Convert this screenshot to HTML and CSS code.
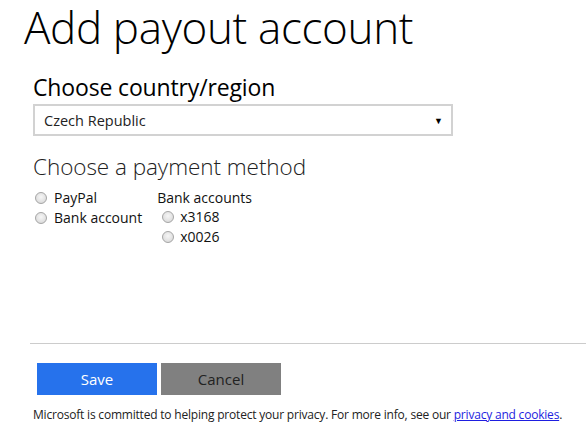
FILE: index.html
```html
<!DOCTYPE html>
<html>
<head>
<meta charset="utf-8">
<link rel="stylesheet" href="styles.css">
</head>
<body>
<div class="page">
  <h1 class="title">Add payout account</h1>
  <section class="country">
    <h2 class="label">Choose country/region</h2>
    <div class="select">
      <span class="select-text">Czech Republic</span>
      <span class="arrow">&#9660;</span>
    </div>
  </section>
  <section class="method">
    <h2 class="sub">Choose a payment method</h2>
    <div class="options">
      <div class="col">
        <label class="opt"><span class="radio"></span>PayPal</label>
        <label class="opt"><span class="radio"></span>Bank account</label>
      </div>
      <div class="col banks">
        <div class="banks-title">Bank accounts</div>
        <label class="opt sub-opt"><span class="radio"></span>x3168</label>
        <label class="opt sub-opt"><span class="radio"></span>x0026</label>
      </div>
    </div>
  </section>
  <hr class="rule">
  <div class="buttons">
    <button class="btn save">Save</button>
    <button class="btn cancel">Cancel</button>
  </div>
  <p class="privacy">Microsoft is committed to helping protect your privacy. For more info, see our <a href="#">privacy and cookies</a>.</p>
</div>
</body>
</html>
```
FILE: styles.css
```css
html, body { margin: 0; padding: 0; background: #fff; }
body { font-family: "Open Sans", "Noto Sans", sans-serif; color: #000; }
.page { width: 586px; height: 439px; overflow: hidden; position: relative; }
.title {
  margin: 0; padding: 0 0 0 24px;
  font-weight: 300; font-size: 44px; line-height: 54px;
  letter-spacing: -0.35px; color: #000;
}
.country { padding: 18px 0 0 33px; }
.label { margin: 0; font-weight: 400; font-size: 23px; line-height: 30px; color: #000; letter-spacing: -0.15px; }
.select {
  height: 28px; border: 2px solid #d2d2d2; margin-top: 2px;
  display: flex; align-items: center; justify-content: space-between;
  padding: 0 8px 0 9px; box-sizing: content-box; width: 399px;
}
.select-text { font-size: 14.5px; color: #222; }
.arrow { font-size: 9px; color: #000; }
.method { padding: 16px 0 0 33px; }
.sub { margin: 0; font-weight: 300; font-size: 22.5px; line-height: 30px; color: #222; letter-spacing: -0.05px; }
.options { display: flex; gap: 15px; padding-top: 6px; }
.col { display: flex; flex-direction: column; }
.opt { display: flex; align-items: center; font-size: 14px; line-height: 20px; color: #111; }
.radio {
  width: 10px; height: 10px; border-radius: 50%; border: 1px solid #a5a5a5;
  background: radial-gradient(circle at 50% 40%, #f6f6f6 0%, #dedede 70%, #d0d0d0 100%);
  margin: 0 7px 0 2px; flex: none;
}
.banks-title { font-size: 14px; line-height: 19px; color: #111; }
.sub-opt { padding-left: 3px; }
.sub-opt .radio { margin-right: 6px; }
.rule { border: 0; border-top: 1px solid #ccc; margin: 96px 0 0 30px; }
.buttons { display: flex; gap: 4px; padding: 19px 0 0 37px; }
.btn {
  width: 120px; height: 32px; border: 0; font-family: inherit; font-size: 15px;
  padding: 0; margin: 0;
}
.save { background: #2672ec; color: #fff; }
.cancel { background: #808080; color: #222; }
.privacy { margin: 11px 0 0 33px; font-size: 12px; color: #222; letter-spacing: -0.2px; }
.privacy a { color: #1e1ee0; }
```
